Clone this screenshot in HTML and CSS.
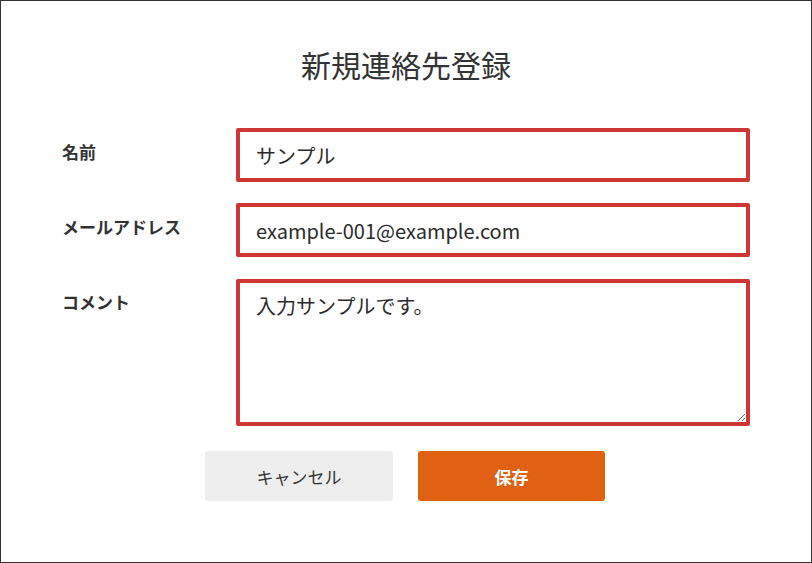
FILE: index.html
```html
<!DOCTYPE html>
<html lang="ja">
<head>
<meta charset="utf-8">
<title>新規連絡先登録</title>
<link rel="stylesheet" href="styles.css">
</head>
<body>
<div class="page">
  <h1 class="title">新規連絡先登録</h1>
  <form class="form">
    <label class="label" for="name">名前</label>
    <input class="field" id="name" type="text" value="サンプル">
    <label class="label" for="email">メールアドレス</label>
    <input class="field" id="email" type="text" value="example-001@example.com">
    <label class="label" for="comment">コメント</label>
    <textarea class="field area" id="comment">入力サンプルです。</textarea>
  </form>
  <div class="actions">
    <button class="btn btn-cancel" type="button">キャンセル</button>
    <button class="btn btn-save" type="button">保存</button>
  </div>
</div>
</body>
</html>
```

FILE: styles.css
```css
* { box-sizing: border-box; }
html, body { margin: 0; padding: 0; background: #fff; }
body {
  font-family: "Noto Sans CJK JP", "Noto Sans", sans-serif;
  color: #333;
}
.page {
  width: 812px;
  height: 563px;
  border: 1px solid #333;
  padding: 41px 61px 0 61px;
}
.title {
  margin: 0 0 41px 0;
  font-size: 30px;
  line-height: 45px;
  font-weight: 400;
  text-align: center;
  color: #333;
}
.form {
  display: grid;
  grid-template-columns: 174px 1fr;
  row-gap: 21px;
  align-items: start;
}
.label {
  font-size: 17px;
  font-weight: 700;
  line-height: 26px;
  padding-top: 11px;
  color: #333;
}
.field {
  display: block;
  width: 100%;
  height: 54px;
  border: 4px solid #cf3636;
  border-radius: 2px;
  padding: 0 16px;
  font-family: inherit;
  font-size: 20px;
  color: #2b2b2b;
  background: #fff;
  outline: none;
}
.area {
  height: 147px;
  padding: 8px 16px;
  line-height: 30px;
  margin-top: 1px;
}
.actions {
  display: flex;
  justify-content: center;
  gap: 25px;
  margin-top: 25px;
  padding-right: 2px;
}
.btn {
  width: 188px;
  height: 50px;
  border: none;
  border-radius: 3px;
  font-family: inherit;
  font-size: 17px;
}
.btn-cancel {
  background: #eeeeee;
  color: #333;
  font-weight: 400;
}
.btn-save {
  width: 187px;
  background: #e06014;
  color: #fff;
  font-weight: 700;
}
```
